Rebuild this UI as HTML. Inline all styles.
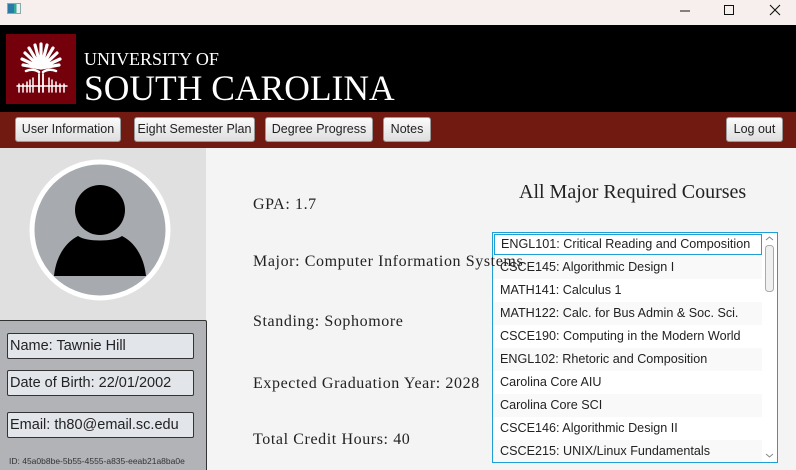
<!DOCTYPE html>
<html><head><meta charset="utf-8">
<style>
*{box-sizing:border-box;margin:0;padding:0}
body{width:796px;height:470px;overflow:hidden;background:#f4f4f4;position:relative;font-family:"Liberation Sans",sans-serif}
.abs{position:absolute}
.tb{left:0;top:0;width:796px;height:25px;background:#f7efed}
.hdr{left:0;top:25px;width:796px;height:87px;background:#000}
.nav{left:0;top:112px;width:796px;height:36px;background:#711a12}
.btn{position:absolute;top:117px;height:25px;background:linear-gradient(#fbfbfb,#dedede);border:1px solid #9a9a9a;border-radius:3px;color:#222;text-align:center;line-height:23px;font-family:"Liberation Sans",sans-serif;font-size:12.5px}
.left{left:0;top:148px;width:206px;height:322px;background:#e0e0e0}
.box{left:0;top:320px;width:207px;height:150px;background:#b1b3b7;border:1px solid #333;border-left:none;border-bottom:none;border-radius:0 2px 0 0}
.fld{position:absolute;left:7px;width:187px;height:26px;background:#e2e6eb;border:1px solid #333;border-radius:2px;font-family:"Liberation Sans",sans-serif;font-size:14.5px;color:#222;line-height:24px;padding-left:2px;white-space:nowrap}
.lbl{position:absolute;left:253px;font-family:"Liberation Serif",serif;font-size:16px;letter-spacing:0.6px;color:#222;z-index:5;white-space:nowrap}
.list{left:492px;top:232px;width:286px;height:231px;border:1px solid #1ea0d6;background:#fff;overflow:hidden}
.row{height:23px;line-height:23px;padding-left:7px;font-family:"Liberation Sans",sans-serif;font-size:12.6px;color:#222;width:270px;white-space:nowrap}
.sb{position:absolute;right:0;top:0;width:15px;height:229px;background:#fff}
</style></head><body>
<div class="abs tb"></div>
<div class="abs" style="left:7px;top:3px;width:14px;height:11px;border:1px solid #8aa;background:linear-gradient(90deg,#2a7aa8 0 50%,#3a9 50% 70%,#eee 70%)"></div>
<svg class="abs" style="left:674px;top:2px" width="120" height="18">
<line x1="6" y1="9" x2="16" y2="9" stroke="#111" stroke-width="1"/>
<rect x="50.5" y="3.5" width="9" height="9" fill="none" stroke="#111"/>
<path d="M96 3 L106 13 M106 3 L96 13" stroke="#111" stroke-width="1.1"/>
</svg>
<div class="abs hdr"></div>
<div class="abs" style="left:6px;top:34px;width:70px;height:70px;background:#73000a"></div>
<svg class="abs" style="left:6px;top:34px" width="70" height="70" stroke="#fff" fill="none" stroke-linecap="round">
<g stroke-width="3.2">
<path d="M35 34 L35 10 M35 34 L29 11 M35 34 L41 11 M35 34 L23 14 M35 34 L47 14 M35 34 L19 19 M35 34 L51 19 M35 34 L16 25 M35 34 L54 25 M35 34 L17 31 M35 34 L53 31"/>
<path d="M20 37 Q27 34 33 38 M50 37 Q43 34 37 38" stroke-width="2.5"/>
</g>
<path d="M33 40 L33 58 M37 40 L37 58" stroke-width="1.8"/>
<path d="M27 44 L27 58 M43 44 L43 58 M13 58 L13 50 M17 58 L17 50 M21 58 L21 48 M24 58 L24 46 M46 58 L46 46 M50 58 L50 48 M54 58 L54 50 M58 58 L58 50 M11 52 L61 52" stroke-width="1.5"/>
</svg>
<div class="abs" style="left:84px;top:48px;color:#fff;font-family:'Liberation Serif',serif;font-size:18px;line-height:22px">UNIVERSITY OF</div>
<div class="abs" style="left:84px;top:68px;color:#fff;font-family:'Liberation Serif',serif;font-size:35.5px;line-height:40px">SOUTH CAROLINA</div>
<div class="abs nav"></div>
<div class="btn" style="left:15px;width:106px">User Information</div>
<div class="btn" style="left:134px;width:121px">Eight Semester Plan</div>
<div class="btn" style="left:265px;width:108px">Degree Progress</div>
<div class="btn" style="left:383px;width:48px">Notes</div>
<div class="btn" style="left:726px;width:57px">Log out</div>
<div class="abs left"></div>
<svg class="abs" style="left:28px;top:158px" width="146" height="146">
<circle cx="72" cy="72" r="68" fill="#a7aaae" stroke="#fff" stroke-width="5"/>
<circle cx="72" cy="52" r="25" fill="#000"/>
<path d="M26 118 C28 98 38 84 50 78 C58 84 86 84 94 78 C106 84 116 98 118 118 Z" fill="#000"/>
</svg>
<div class="abs box"></div>
<div class="fld" style="top:333px">Name: Tawnie Hill</div>
<div class="fld" style="top:370px">Date of Birth: 22/01/2002</div>
<div class="fld" style="top:412px">Email: th80@email.sc.edu</div>
<div class="abs" style="left:9px;top:456px;font-family:'Liberation Sans',sans-serif;font-size:8.5px;color:#333;white-space:nowrap">ID: 45a0b8be-5b55-4555-a835-eeab21a8ba0e</div>
<div class="lbl" style="top:196px">GPA: 1.7</div>
<div class="abs" style="left:519px;top:181px;font-family:'Liberation Serif',serif;font-size:20px;color:#222;white-space:nowrap">All Major Required Courses</div>
<div class="lbl" style="top:253px">Major: Computer Information Systems</div>
<div class="lbl" style="top:313px">Standing: Sophomore</div>
<div class="lbl" style="top:375px">Expected Graduation Year: 2028</div>
<div class="lbl" style="top:431px">Total Credit Hours: 40</div>
<div class="abs list">
<div class="row" style="border:1px solid #1ea0d6;margin:1px;height:21px;line-height:19px;width:268px;padding-left:6px">ENGL101: Critical Reading and Composition</div>
<div class="row" style="background:#f9f9f9">CSCE145: Algorithmic Design I</div>
<div class="row" style="background:#fff">MATH141: Calculus 1</div>
<div class="row" style="background:#f9f9f9">MATH122: Calc. for Bus Admin &amp; Soc. Sci.</div>
<div class="row" style="background:#fff">CSCE190: Computing in the Modern World</div>
<div class="row" style="background:#f9f9f9">ENGL102: Rhetoric and Composition</div>
<div class="row" style="background:#fff">Carolina Core AIU</div>
<div class="row" style="background:#f9f9f9">Carolina Core SCI</div>
<div class="row" style="background:#fff">CSCE146: Algorithmic Design II</div>
<div class="row" style="background:#f9f9f9">CSCE215: UNIX/Linux Fundamentals</div>
<div class="sb">
<svg width="15" height="229"><path d="M4 7 L7.5 4 L11 7" stroke="#888" fill="none"/><rect x="3.5" y="12.5" width="8" height="46" rx="3" fill="#f0f0f0" stroke="#aaa"/><path d="M4 221 L7.5 224 L11 221" stroke="#888" fill="none"/></svg>
</div>
</div>
</body></html>
